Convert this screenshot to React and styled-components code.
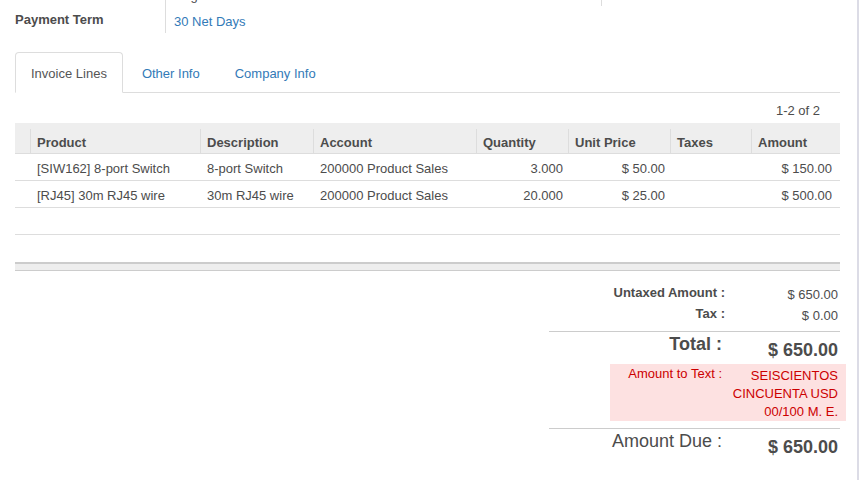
import React from "react"
import styled, { createGlobalStyle } from "styled-components"

const lines = [
  { product: "[SIW162] 8-port Switch", description: "8-port Switch", account: "200000 Product Sales", qty: "3.000", price: "$ 50.00", taxes: "", amount: "$ 150.00" },
  { product: "[RJ45] 30m RJ45 wire", description: "30m RJ45 wire", account: "200000 Product Sales", qty: "20.000", price: "$ 25.00", taxes: "", amount: "$ 500.00" },
]

const columns = [
  { key: "product", label: "Product", width: 170 },
  { key: "description", label: "Description", width: 113 },
  { key: "account", label: "Account", width: 163 },
  { key: "qty", label: "Quantity", width: 92, num: true },
  { key: "price", label: "Unit Price", width: 102, num: true },
  { key: "taxes", label: "Taxes", width: 81 },
  { key: "amount", label: "Amount", width: 89, num: true, last: true },
]

export default () => (
  <>
    <Global />
    <Sheet>
      <Fields>
        <Group>
          <FieldRow>
            <Label />
            <Value>Regular</Value>
          </FieldRow>
          <FieldRow tall>
            <Label>Payment Term</Label>
            <Value link>30 Net Days</Value>
          </FieldRow>
        </Group>
        <Group right>
          <FieldRow>
            <Label />
            <Value />
          </FieldRow>
        </Group>
      </Fields>

      <TabBar>
        <Tab active>Invoice Lines</Tab>
        <Tab>Other Info</Tab>
        <Tab>Company Info</Tab>
      </TabBar>

      <Pager>1-2 of 2</Pager>

      <Table>
        <colgroup>
          <col style={{ width: 15 }} />
          {columns.map(c => (
            <col key={c.key} style={{ width: c.width }} />
          ))}
        </colgroup>
        <thead>
          <tr>
            <Th first />
            {columns.map(c => (
              <Th key={c.key}>{c.label}</Th>
            ))}
          </tr>
        </thead>
        <tbody>
          {lines.map((l, i) => (
            <tr key={i}>
              <Td />
              {columns.map(c => (
                <Td key={c.key} num={c.num} last={c.last}>
                  {l[c.key]}
                </Td>
              ))}
            </tr>
          ))}
          <tr>
            <Td />
            <Td colSpan={7}>&nbsp;</Td>
          </tr>
          <tr>
            <Td plain />
            <Td plain colSpan={7}>&nbsp;</Td>
          </tr>
        </tbody>
      </Table>
      <TableFoot />

      <Totals>
        <SubRow>
          <SubLabel>Untaxed Amount :</SubLabel>
          <SubValue>$ 650.00</SubValue>
        </SubRow>
        <SubRow>
          <SubLabel>Tax :</SubLabel>
          <SubValue>$ 0.00</SubValue>
        </SubRow>
        <Rule />
        <BigRow>
          <BigLabel bold>Total :</BigLabel>
          <BigValue>$ 650.00</BigValue>
        </BigRow>
        <AlertBox>
          <AlertLabel>Amount to Text :</AlertLabel>
          <AlertValue>SEISCIENTOS CINCUENTA USD 00/100 M. E.</AlertValue>
        </AlertBox>
        <Rule />
        <BigRow>
          <BigLabel>Amount Due :</BigLabel>
          <BigValue>$ 650.00</BigValue>
        </BigRow>
      </Totals>
    </Sheet>
  </>
)

const Global = createGlobalStyle`
  html, body {
    margin: 0;
    background: #fff;
    overflow: hidden;
  }
  body {
    font-family: "Liberation Sans", Arial, sans-serif;
    font-size: 13px;
    color: #4c4c4c;
  }
  * { box-sizing: border-box; }
`

const Sheet = styled.div`
  width: 859px;
  height: 480px;
  padding: 0 17px 0 15px;
  border-right: 2px solid #dcdce6;
  overflow: hidden;
`

const Fields = styled.div`
  display: grid;
  grid-template-columns: 415px 1fr;
  margin-top: -14px;
`

const Group = styled.div`
  display: grid;
  grid-template-columns: ${p => (p.right ? "171px 1fr" : "150px 1fr")};
  align-content: start;
`

const FieldRow = styled.div`
  display: contents;
  & > * {
    height: ${p => (p.tall ? "27px" : "20px")};
    line-height: ${p => (p.tall ? "27px" : "20px")};
  }
`

const Label = styled.div`
  font-weight: bold;
  white-space: nowrap;
`

const Value = styled.div`
  border-left: 1px solid #dddddd;
  padding: ${p => (p.link ? "2px 0 0 8px" : "0 0 0 8px")};
  color: ${p => (p.link ? "#337ab7" : "#4c4c4c")};
`

const TabBar = styled.div`
  display: flex;
  margin-top: 19px;
  border-bottom: 1px solid #dddddd;
`

const Tab = styled.div`
  padding: 11px 15px 9px;
  line-height: 19px;
  margin-right: 3px;
  margin-bottom: -1px;
  border: 1px solid ${p => (p.active ? "#dddddd" : "transparent")};
  border-bottom-color: ${p => (p.active ? "#fff" : "transparent")};
  border-radius: 4px 4px 0 0;
  background: ${p => (p.active ? "#fff" : "transparent")};
  color: ${p => (p.active ? "#555555" : "#337ab7")};
`

const Pager = styled.div`
  text-align: right;
  line-height: 18px;
  padding: 9px 20px 3px 0;
  color: #4c4c4c;
`

const Table = styled.table`
  width: 100%;
  table-layout: fixed;
  border-collapse: collapse;
`

const Th = styled.th`
  position: relative;
  background: #eeeeee;
  height: 30px;
  padding: 12px 6px 2px 7px;
  line-height: 16px;
  text-align: left;
  font-weight: bold;
  color: #4c4c4c;
  border-bottom: 1px solid #dddddd;
  white-space: nowrap;
  &::before {
    content: "";
    display: ${p => (p.first ? "none" : "block")};
    position: absolute;
    left: 0;
    top: 6px;
    bottom: 0;
    border-left: 1px solid #dddddd;
  }
`

const Td = styled.td`
  height: 27px;
  padding: 6px ${p => (p.last ? "8px" : "5px")} 2px 7px;
  line-height: 18px;
  text-align: ${p => (p.num ? "right" : "left")};
  border-bottom: ${p => (p.plain ? "none" : "1px solid #dddddd")};
  white-space: nowrap;
  overflow: hidden;
`

const TableFoot = styled.div`
  height: 9px;
  background: #eeeeee;
  border-top: 2px solid #cccccc;
  border-bottom: 1px solid #cccccc;
`

const Totals = styled.div`
  width: 291px;
  margin: 11px 0 0 auto;
  padding-right: 2px;
`

const SubRow = styled.div`
  display: grid;
  grid-template-columns: 1fr 113px;
  height: 21px;
`

const SubLabel = styled.div`
  text-align: right;
  font-weight: bold;
  line-height: 21px;
`

const SubValue = styled.div`
  text-align: right;
  line-height: 17px;
  padding-top: 4px;
`

const Rule = styled.div`
  border-top: 1px solid #cccccc;
  margin: 7px -2px 0 0;
`

const BigRow = styled.div`
  display: grid;
  grid-template-columns: 1fr 113px;
`

const BigLabel = styled.div`
  text-align: right;
  font-size: 18px;
  font-weight: ${p => (p.bold ? "bold" : "normal")};
  line-height: 22px;
  padding: 1px 3px 0 0;
  color: #4c4c4c;
`

const BigValue = styled.div`
  text-align: right;
  font-size: 18px;
  font-weight: bold;
  line-height: 22px;
  padding-top: 7px;
  white-space: nowrap;
`

const AlertBox = styled.div`
  display: grid;
  grid-template-columns: 1fr 113px;
  margin: 3px -8px 0 61px;
  padding: 0 8px 0 0;
  background: #fde1e1;
  color: #cc0000;
`

const AlertLabel = styled.div`
  text-align: right;
  padding: 1px 3px 0 0;
  line-height: 18px;
`

const AlertValue = styled.div`
  text-align: right;
  padding-top: 3px;
  line-height: 18px;
`
